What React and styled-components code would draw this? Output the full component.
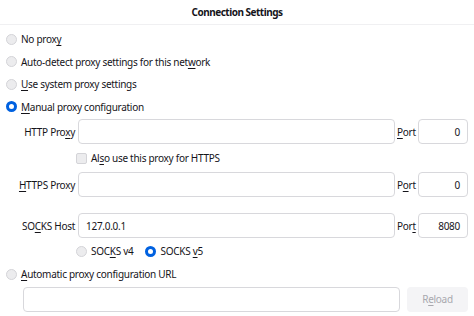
import React from "react";
import styled, { createGlobalStyle } from "styled-components";

const GlobalStyle = createGlobalStyle`
  html, body {
    margin: 0;
    padding: 0;
    background: #ffffff;
  }
  body {
    font-family: "Noto Sans", "Open Sans", sans-serif;
    font-size: 10px;
    letter-spacing: -0.28px;
    color: #15141a;
  }
`;

const Dialog = styled.div`
  width: 474px;
  height: 316px;
  overflow: hidden;
  display: flex;
  flex-direction: column;
`;

const Header = styled.div`
  height: 24px;
  flex: none;
  display: flex;
  align-items: center;
  justify-content: center;
  border-bottom: 1px solid #f0f0f2;
  font-weight: 700;
  font-size: 10px;
  letter-spacing: -0.5px;
`;

const Body = styled.div`
  display: flex;
  flex-direction: column;
  padding-top: 3px;
`;

const RadioRow = styled.label`
  height: 22.5px;
  display: flex;
  align-items: center;
  gap: 4px;
  padding-left: 6px;
  margin-top: ${(p) => p.$gap || 0}px;
`;

const Radio = styled.span`
  width: 11px;
  height: 11px;
  flex: none;
  box-sizing: border-box;
  border-radius: 50%;
  background: ${(p) => (p.$checked ? "#ffffff" : "#ececee")};
  border: ${(p) => (p.$checked ? "3px solid #0061e0" : "1px solid #d4d4d8")};
`;

const Key = styled.u`
  text-decoration-thickness: 1px;
  text-underline-offset: 1.5px;
`;

const ProxyGrid = styled.div`
  display: grid;
  grid-template-columns: 75px 317px 17px 50px;
  column-gap: 3px;
  align-items: center;
  margin-top: 1px;
`;

const FieldLabel = styled.span`
  text-align: right;
  white-space: nowrap;
  margin-top: ${(p) => p.$gap || 0}px;
`;

const PortLabel = styled.span`
  white-space: nowrap;
  margin-left: -1px;
  margin-top: ${(p) => p.$gap || 0}px;
`;

const Input = styled.div`
  height: 25px;
  box-sizing: border-box;
  border: 1px solid #d8d8dc;
  border-radius: 4px;
  background: #ffffff;
  display: flex;
  align-items: center;
  justify-content: ${(p) => (p.$right ? "flex-end" : "flex-start")};
  padding: 0 7px;
  margin-top: ${(p) => p.$gap || 0}px;
`;

const CheckRow = styled.label`
  grid-column: 2 / 5;
  height: 20px;
  margin: 4px 0 4px -2px;
  display: flex;
  align-items: center;
  gap: 4px;
`;

const Checkbox = styled.span`
  width: 11px;
  height: 11px;
  box-sizing: border-box;
  border: 1px solid #d4d4d8;
  border-radius: 2px;
  background: #ececee;
`;

const SocksRow = styled.div`
  grid-column: 2 / 5;
  height: 20px;
  margin: 3px 0 0 -2px;
  display: flex;
  align-items: center;
  gap: 4px;
`;

const SocksOption = styled.span`
  display: flex;
  align-items: center;
  gap: 4px;
  margin-right: 8px;
`;

const UrlRow = styled.div`
  display: flex;
  gap: 7px;
  padding-left: 23px;
  margin-top: 1px;
`;

const UrlInput = styled(Input)`
  width: 377px;
`;

const ReloadButton = styled.div`
  width: 61px;
  height: 25px;
  border-radius: 4px;
  background: #f4f4f6;
  color: #a8a8ae;
  display: flex;
  align-items: center;
  justify-content: center;
`;

export default function App() {
  return (
    <Dialog>
      <GlobalStyle />
      <Header>Connection Settings</Header>
      <Body>
        <RadioRow>
          <Radio />
          <span>
            No prox<Key>y</Key>
          </span>
        </RadioRow>
        <RadioRow>
          <Radio />
          <span>
            Auto-detect proxy settings for this net<Key>w</Key>ork
          </span>
        </RadioRow>
        <RadioRow>
          <Radio />
          <span>
            <Key>U</Key>se system proxy settings
          </span>
        </RadioRow>
        <RadioRow>
          <Radio $checked />
          <span>
            <Key>M</Key>anual proxy configuration
          </span>
        </RadioRow>
        <ProxyGrid>
          <FieldLabel>
            HTTP Pro<Key>x</Key>y
          </FieldLabel>
          <Input />
          <PortLabel>
            <Key>P</Key>ort
          </PortLabel>
          <Input $right>0</Input>

          <CheckRow>
            <Checkbox />
            <span>
              Al<Key>s</Key>o use this proxy for HTTPS
            </span>
          </CheckRow>

          <FieldLabel>
            <Key>H</Key>TTPS Proxy
          </FieldLabel>
          <Input />
          <PortLabel>
            P<Key>o</Key>rt
          </PortLabel>
          <Input $right>0</Input>

          <FieldLabel $gap={16}>
            SO<Key>C</Key>KS Host
          </FieldLabel>
          <Input $gap={16}>127.0.0.1</Input>
          <PortLabel $gap={16}>
            Por<Key>t</Key>
          </PortLabel>
          <Input $right $gap={16}>
            8080
          </Input>

          <SocksRow>
            <SocksOption>
              <Radio />
              <span>
                SOC<Key>K</Key>S v4
              </span>
            </SocksOption>
            <SocksOption>
              <Radio $checked />
              <span>
                SOCKS <Key>v</Key>5
              </span>
            </SocksOption>
          </SocksRow>
        </ProxyGrid>
        <RadioRow $gap={2}>
          <Radio />
          <span>
            <Key>A</Key>utomatic proxy configuration URL
          </span>
        </RadioRow>
        <UrlRow>
          <UrlInput />
          <ReloadButton>
            R<Key>e</Key>load
          </ReloadButton>
        </UrlRow>
      </Body>
    </Dialog>
  );
}
